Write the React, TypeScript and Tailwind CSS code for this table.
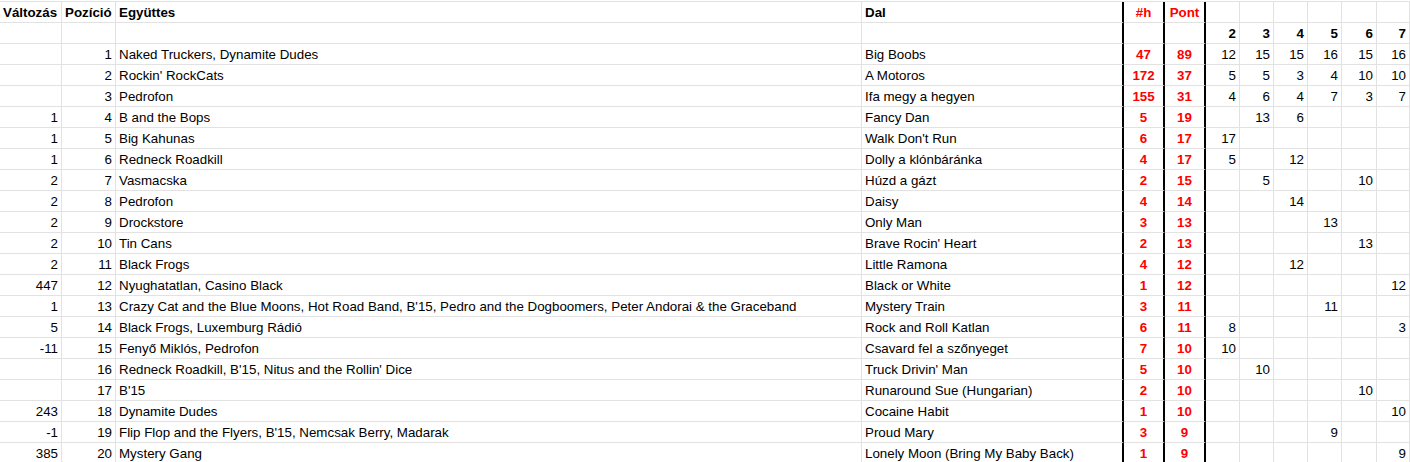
type Row = {
  change: string;
  pos: number;
  band: string;
  song: string;
  hits: number;
  points: number;
  rounds: (number | null)[];
};

const rows: Row[] = [
  { change: "", pos: 1, band: "Naked Truckers, Dynamite Dudes", song: "Big Boobs", hits: 47, points: 89, rounds: [12, 15, 15, 16, 15, 16] },
  { change: "", pos: 2, band: "Rockin' RockCats", song: "A Motoros", hits: 172, points: 37, rounds: [5, 5, 3, 4, 10, 10] },
  { change: "", pos: 3, band: "Pedrofon", song: "Ifa megy a hegyen", hits: 155, points: 31, rounds: [4, 6, 4, 7, 3, 7] },
  { change: "1", pos: 4, band: "B and the Bops", song: "Fancy Dan", hits: 5, points: 19, rounds: [null, 13, 6, null, null, null] },
  { change: "1", pos: 5, band: "Big Kahunas", song: "Walk Don't Run", hits: 6, points: 17, rounds: [17, null, null, null, null, null] },
  { change: "1", pos: 6, band: "Redneck Roadkill", song: "Dolly a klónbáránka", hits: 4, points: 17, rounds: [5, null, 12, null, null, null] },
  { change: "2", pos: 7, band: "Vasmacska", song: "Húzd a gázt", hits: 2, points: 15, rounds: [null, 5, null, null, 10, null] },
  { change: "2", pos: 8, band: "Pedrofon", song: "Daisy", hits: 4, points: 14, rounds: [null, null, 14, null, null, null] },
  { change: "2", pos: 9, band: "Drockstore", song: "Only Man", hits: 3, points: 13, rounds: [null, null, null, 13, null, null] },
  { change: "2", pos: 10, band: "Tin Cans", song: "Brave Rocin' Heart", hits: 2, points: 13, rounds: [null, null, null, null, 13, null] },
  { change: "2", pos: 11, band: "Black Frogs", song: "Little Ramona", hits: 4, points: 12, rounds: [null, null, 12, null, null, null] },
  { change: "447", pos: 12, band: "Nyughatatlan, Casino Black", song: "Black or White", hits: 1, points: 12, rounds: [null, null, null, null, null, 12] },
  { change: "1", pos: 13, band: "Crazy Cat and the Blue Moons, Hot Road Band, B'15, Pedro and the Dogboomers, Peter Andorai & the Graceband", song: "Mystery Train", hits: 3, points: 11, rounds: [null, null, null, 11, null, null] },
  { change: "5", pos: 14, band: "Black Frogs, Luxemburg Rádió", song: "Rock and Roll Katlan", hits: 6, points: 11, rounds: [8, null, null, null, null, 3] },
  { change: "-11", pos: 15, band: "Fenyő Miklós, Pedrofon", song: "Csavard fel a szőnyeget", hits: 7, points: 10, rounds: [10, null, null, null, null, null] },
  { change: "", pos: 16, band: "Redneck Roadkill, B'15, Nitus and the Rollin' Dice", song: "Truck Drivin' Man", hits: 5, points: 10, rounds: [null, 10, null, null, null, null] },
  { change: "", pos: 17, band: "B'15", song: "Runaround Sue (Hungarian)", hits: 2, points: 10, rounds: [null, null, null, null, 10, null] },
  { change: "243", pos: 18, band: "Dynamite Dudes", song: "Cocaine Habit", hits: 1, points: 10, rounds: [null, null, null, null, null, 10] },
  { change: "-1", pos: 19, band: "Flip Flop and the Flyers, B'15, Nemcsak Berry, Madarak", song: "Proud Mary", hits: 3, points: 9, rounds: [null, null, null, 9, null, null] },
  { change: "385", pos: 20, band: "Mystery Gang", song: "Lonely Moon (Bring My Baby Back)", hits: 1, points: 9, rounds: [null, null, null, null, null, 9] },
];

// widths of the six round columns, right border included
const roundWidths = ["w-[34px]", "w-[34px]", "w-[34px]", "w-[34px]", "w-[35px]", "w-[33px]"];

const cell = "h-[21px] shrink-0 overflow-hidden whitespace-nowrap border-b border-r border-[#e2e2e2] px-[3px] leading-[21px]";
const thick = "h-[21px] shrink-0 overflow-hidden whitespace-nowrap border-b border-b-[#e2e2e2] border-r-2 border-r-black px-[3px] leading-[21px] text-center font-bold text-[#ff0000]";

function RoundCells({ values, bold }: { values: (number | string | null)[]; bold?: boolean }) {
  return (
    <>
      {values.map((v, i) => (
        <div key={i} className={`${cell} ${roundWidths[i]} text-right ${bold ? "font-bold" : ""}`}>
          {v ?? ""}
        </div>
      ))}
    </>
  );
}

export default function App() {
  return (
    <div className="h-[462px] w-[1410px] overflow-hidden bg-white pt-[1px] text-[13.33px] text-black [font-family:'Liberation_Sans',Arial,sans-serif]">
      <div className="flex border-t border-[#e2e2e2]">
        <div className={`${cell} w-[62px] font-bold`}>Változás</div>
        <div className={`${cell} w-[54px] font-bold`}>Pozíció</div>
        <div className={`${cell} w-[746px] font-bold`}>Együttes</div>
        <div className={`${thick} w-[262px] !text-left !text-black`}>Dal</div>
        <div className={`${thick} w-[41px]`}>#h</div>
        <div className={`${thick} w-[41px]`}>Pont</div>
        <RoundCells values={[null, null, null, null, null, null]} />
      </div>
      <div className="flex">
        <div className={`${cell} w-[62px]`} />
        <div className={`${cell} w-[54px]`} />
        <div className={`${cell} w-[746px]`} />
        <div className={`${thick} w-[262px]`} />
        <div className={`${thick} w-[41px]`} />
        <div className={`${thick} w-[41px]`} />
        <RoundCells values={[2, 3, 4, 5, 6, 7]} bold />
      </div>
      {rows.map((r) => (
        <div key={r.pos} className="flex">
          <div className={`${cell} w-[62px] text-right`}>{r.change}</div>
          <div className={`${cell} w-[54px] text-right`}>{r.pos}</div>
          <div className={`${cell} w-[746px]`}>{r.band}</div>
          <div className={`${thick} w-[262px] !text-left !font-normal !text-black`}>{r.song}</div>
          <div className={`${thick} w-[41px]`}>{r.hits}</div>
          <div className={`${thick} w-[41px]`}>{r.points}</div>
          <RoundCells values={r.rounds} />
        </div>
      ))}
    </div>
  );
}
